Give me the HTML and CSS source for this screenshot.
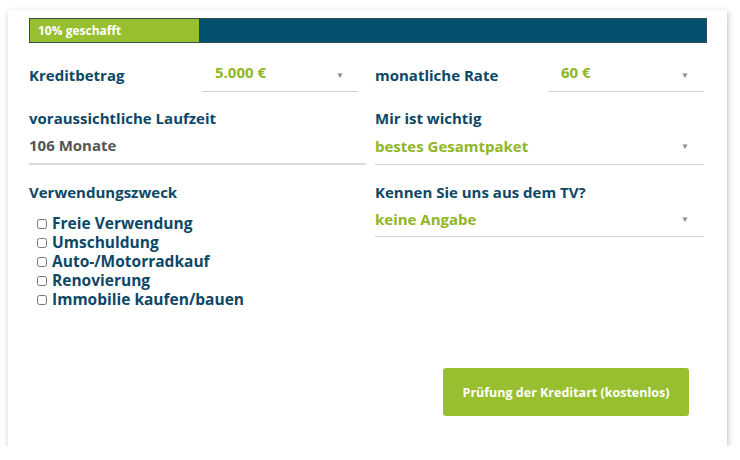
FILE: index.html
```html
<!DOCTYPE html>
<html lang="de">

<head>
  <meta charset="UTF-8" />
  <meta name="viewport" content="width=device-width, initial-scale=1.0" />
  <title>Kreditanfrage</title>
  <link rel="stylesheet" href="styles.css">
</head>

<body>
  <div class="card">
    <div class="progress">
      <div class="progress-fill">10% geschafft</div>
    </div>

    <div class="grid">
      <div class="col">
        <div class="inline-row">
          <span class="label">Kreditbetrag</span>
          <div class="select short left">
            <span class="value">5.000 €</span>
            <span class="arrow">▼</span>
          </div>
        </div>

        <div class="field">
          <div class="label">voraussichtliche Laufzeit</div>
          <div class="static">106 Monate</div>
        </div>

        <div class="field">
          <div class="label">Verwendungszweck</div>
          <ul class="checks">
            <li><label><input type="checkbox" /> Freie Verwendung</label></li>
            <li><label><input type="checkbox" /> Umschuldung</label></li>
            <li><label><input type="checkbox" /> Auto-/Motorradkauf</label></li>
            <li><label><input type="checkbox" /> Renovierung</label></li>
            <li><label><input type="checkbox" /> Immobilie kaufen/bauen</label></li>
          </ul>
        </div>
      </div>

      <div class="col">
        <div class="inline-row">
          <span class="label">monatliche Rate</span>
          <div class="select short">
            <span class="value">60 €</span>
            <span class="arrow">▼</span>
          </div>
        </div>

        <div class="field">
          <div class="label">Mir ist wichtig</div>
          <div class="select">
            <span class="value">bestes Gesamtpaket</span>
            <span class="arrow">▼</span>
          </div>
        </div>

        <div class="field">
          <div class="label">Kennen Sie uns aus dem TV?</div>
          <div class="select">
            <span class="value">keine Angabe</span>
            <span class="arrow">▼</span>
          </div>
        </div>
      </div>
    </div>

    <div class="actions">
      <button class="submit-btn">Prüfung der Kreditart (kostenlos)</button>
    </div>
  </div>
</body>

</html>
```

FILE: styles.css
```css
body {
  margin: 0;
  background: #ffffff;
  font-family: "Open Sans", Arial, sans-serif;
  color: #0d4766;
}

.card {
  width: 719px;
  height: 436px;
  margin: 10px 0 0 8px;
  padding: 8px 20px 0 21px;
  box-sizing: border-box;
  background: #ffffff;
  box-shadow: 1px 2px 6px rgba(0, 0, 0, 0.25);
}

.progress {
  height: 25px;
  border: 1px solid #3a4a52;
  background-color: #03506f;
  box-sizing: border-box;
}

.progress-fill {
  width: 25%;
  height: 100%;
  background-color: #97bf30;
  color: white;
  font-size: 12px;
  font-weight: 700;
  line-height: 23px;
  padding-left: 8px;
  box-sizing: border-box;
}

.grid {
  display: grid;
  grid-template-columns: 337px 329px;
  column-gap: 9px;
  margin-top: 14px;
}

.label {
  font-size: 15px;
  font-weight: 700;
  line-height: 20px;
  color: #0d4766;
}

.inline-row {
  display: flex;
  align-items: center;
  justify-content: space-between;
  height: 35px;
}

.select {
  display: flex;
  justify-content: space-between;
  align-items: center;
  border-bottom: 1px solid #d4d4d4;
  height: 35px;
  padding: 0 15px 1px 0;
  box-sizing: border-box;
}

.select.short {
  width: 156px;
  padding-left: 13px;
  padding-bottom: 4px;
}

.select.left {
  margin-right: 8px;
  padding-right: 14px;
}

.value {
  font-size: 15px;
  font-weight: 700;
  color: #8fb624;
}

.arrow {
  font-size: 8px;
  color: #8a8a8a;
}

.select.short .arrow {
  margin-top: 4px;
}

.field {
  margin-top: 17px;
}

.inline-row + .field {
  margin-top: 16px;
}

.inline-row + .field .select,
.static {
  height: 37px;
}

.static {
  font-size: 15px;
  font-weight: 700;
  color: #555555;
  line-height: 35px;
  border-bottom: 2px solid #dcdcdc;
  box-sizing: border-box;
}

.checks {
  list-style: none;
  margin: 12px 0 0 0;
  padding: 0 0 0 8px;
}

.checks li {
  font-size: 15.5px;
  font-weight: 700;
  line-height: 19px;
}

.checks input {
  width: 10px;
  height: 10px;
  margin: 0 1px 0 0;
}

.actions {
  display: flex;
  justify-content: flex-end;
  padding-right: 18px;
  margin-top: 59px;
}

.submit-btn {
  width: 246px;
  height: 48px;
  background-color: #97bf30;
  color: white;
  border: none;
  border-radius: 3px;
  font-family: "Open Sans", Arial, sans-serif;
  font-size: 12.5px;
  font-weight: 700;
  cursor: pointer;
}
```
